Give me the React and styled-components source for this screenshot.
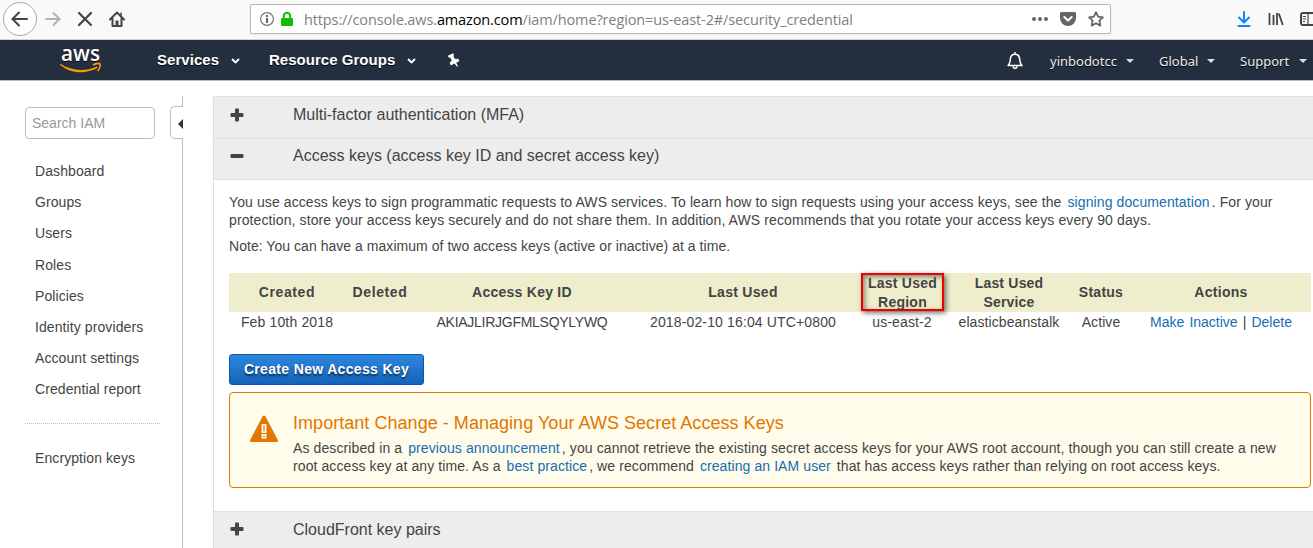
import React from 'react';
import styled, { createGlobalStyle } from 'styled-components';

const Global = createGlobalStyle`
  * { box-sizing: border-box; }
  body { margin: 0; background: #fff; color: #444; overflow: hidden; font: 14px/18px "Liberation Sans", Arial, sans-serif; }
`;

const Page = styled.div`width: 1313px; height: 548px; overflow: hidden; display: flex; flex-direction: column;`;

const BrowserBar = styled.div`
  height: 40px; flex: none; display: flex; align-items: flex-start; background: #f9f9fa;
  border-bottom: 1px solid #d0d0d2; overflow: hidden;
`;
const BrowserIcon = styled.svg`
  flex: none; display: block; width: ${p => p.$w}px; height: ${p => p.$h}px;
  margin: ${p => p.$top || 0}px 0 0 ${p => p.$left || 0}px; overflow: visible;
`;
const AddressBar = styled.div`
  width: 861px; height: 30px; margin: 4px 0 0 125px; flex: none; display: flex; background: #fff;
  border: 1px solid #b8b8ba; border-radius: 2px; box-shadow: 0 1px 3px rgba(0,0,0,.06);
`;
const Url = styled.div`
  width: 731px; padding-left: 11px; white-space: nowrap; color: #808080;
  font: 14.5px/29px "Open Sans", "Noto Sans", sans-serif; letter-spacing: ${p => p.$ls}px;
  b { font-weight: 400; color: #000; }
`;

const NavBar = styled.nav`
  height: 41px; flex: none; display: flex; background: #232f3e; border-bottom: 1px solid #b5b9be;
  color: #fff; text-shadow: 0 1px 0 #000;
`;
const Logo = styled.svg`width: 44px; height: 32px; margin: 5px 0 0 59px; flex: none; display: block; overflow: visible;`;
const MainMenu = styled.div`
  margin-left: ${p => p.$left}px; width: ${p => p.$w}px; flex: none; display: flex; white-space: nowrap;
  font: bold 15px/39px "Liberation Sans", Arial, sans-serif; letter-spacing: ${p => p.$ls}px;
  justify-content: space-between; align-items: flex-start;
`;
const UserMenu = styled.div`
  margin-left: ${p => p.$left}px; width: ${p => p.$w}px; flex: none; display: flex; white-space: nowrap;
  font: 13px/42px "Noto Sans", sans-serif; color: #eee; letter-spacing: ${p => p.$ls || 0}px;
  justify-content: space-between; align-items: flex-start;
`;
const Chevron = styled.svg`width: 9px; height: 6px; margin-top: 18px; flex: none;`;
const Caret = styled.i`
  border: 4px solid transparent; border-top-color: #ddd; border-bottom: 0; margin-top: 19px; flex: none;
`;

const Body = styled.div`flex: 1; display: flex; min-height: 0; padding-top: 15px;`;
const Sidebar = styled.aside`width: 170px; flex: none; padding: 11px 0 0 25px;`;
const Search = styled.div`
  width: 130px; height: 32px; border: 1px solid #bbb; border-radius: 4px; padding-left: 6px; margin-bottom: 17px;
  line-height: 31px; color: #999;
`;
const SideLink = styled.div`height: 31.2px; line-height: 31px; padding-left: 10px; white-space: nowrap; letter-spacing: .09px;`;
const SideRule = styled.hr`width: 135px; margin: 17px 0 19px; border: 0; border-top: 1px dotted #bbb;`;

const Splitter = styled.div`width: 13px; flex: none; display: flex; flex-direction: column; align-items: stretch;`;
const SplitLine = styled.div`
  border-right: 1px solid #bbb; height: ${p => p.$h ? p.$h + 'px' : 'auto'}; flex: ${p => p.$h ? 'none' : 1};
`;
const SplitHandle = styled.div`
  height: 33px; flex: none; border: 1px solid #bbb; border-right: 0; border-radius: 5px 0 0 5px;
  display: flex; align-items: center; justify-content: flex-end; padding-top: 3px;
  &::after { content: ''; border: 5px solid transparent; border-right-color: #333; border-left: 0; }
`;

const Panel = styled.main`
  width: 1100px; margin-left: 30px; flex: none; border-left: 1px solid #ddd; white-space: nowrap;
`;
const SectionHead = styled.div`
  height: ${p => p.$h || 41}px; background: #ededed; border-top: 1px solid #e0e0e0; display: flex; padding-left: 15px;
  border-bottom: ${p => p.$open ? '1px solid #ddd' : 0};
  font-size: 16px; line-height: ${p => p.$open ? 33 : 35}px; letter-spacing: ${p => p.$ls || 0}px;
  svg { width: 14px; height: 14px; margin: ${p => p.$top || 11}px 49px 0 1px; flex: none; }
`;
const Content = styled.section`padding: 13px 0 0 15px; height: 331px;`;
const Line = styled.div`letter-spacing: ${p => p.$ls || 0}px; margin-top: ${p => p.$top || 0}px;`;
const Link = styled.a`color: #146eb4; margin: 0 ${p => p.$tight ? 0 : 2}px;`;

const Row = styled.div`
  width: 1082px; display: grid; grid-template-columns: 116px 70px 214px 228px 90px 124px 60px 180px;
  text-align: center; align-items: center;
`;
const HeadRow = styled(Row)`
  height: 39px; margin-top: 18px; background: #eec; font-weight: bold; line-height: 19px;
`;
const DataRow = styled(Row)`height: 20px;`;
const Cell = styled.div`letter-spacing: ${p => p.$ls || 0}px; word-spacing: ${p => p.$ws || 0}px;`;
const Marked = styled.div`
  width: 83px; height: 38px; align-self: start; border: 2px solid #f00000; margin-left: 4px; padding-top: 1px;
  display: flex; align-items: center; justify-content: center;
  letter-spacing: .25px; box-shadow: 2px 2px 5px rgba(0,0,0,.55), inset 2px 2px 5px rgba(0,0,0,.45);
`;

const Button = styled.button`
  display: block; width: 195px; height: 31px; margin: 22px 0 7px; padding: 0 0 1px; border: 1px solid #0e58a8; border-radius: 3px;
  background: linear-gradient(#2f86de, #1264b9); color: #fff; font: bold 14px/28px "Liberation Sans", Arial, sans-serif;
  letter-spacing: .33px; text-shadow: 0 2px 2px rgba(0,0,0,.6);
`;
const Alert = styled.div`
  width: 1082px; height: 96px; border: 1px solid #e07700; border-radius: 4px; background: #fffceb; display: flex; padding-left: 19px;
  > svg { width: 30px; height: 28px; margin: 22px 14px 0 0; flex: none; }
`;
const AlertTitle = styled.h3`
  margin: 20px 0 6px; font-weight: 400; font-size: 18px; line-height: 20px; color: #e07700; letter-spacing: ${p => p.$ls || 0}px;
`;

const Plus = () => <svg viewBox="0 0 14 14"><path d="M6 .5h2q1 0 1 1V5h3.500q1 0 1 1v2q0 1-1 1H9v3.500q0 1-1 1H6q-1 0-1-1V9H1.500q-1 0-1-1V6q0-1 1-1H5V1.500q0-1 1-1z" fill="#444" /></svg>;
const Minus = () => <svg viewBox="0 0 14 14"><rect x=".5" y="5" width="13" height="4" rx="1" fill="#444" /></svg>;
const Down = () => <Chevron viewBox="0 0 9 6"><path d="M1 1l3.500 3.500L8 1" fill="none" stroke="#fff" strokeWidth="1.800" /></Chevron>;

const links = ['Dashboard', 'Groups', 'Users', 'Roles', 'Policies', 'Identity providers', 'Account settings', 'Credential report'];

export default function App() {
  return (
    <Page>
      <Global />
      <BrowserBar>
        <BrowserIcon $w={34} $h={34} $left={3} $top={2} viewBox="0 0 34 34">
          <circle cx="17" cy="17" r="16.500" fill="#fff" stroke="#aaa" />
          <path d="M24 17H10M16 10.500L9.500 17l6.500 6.500" fill="none" stroke="#444" strokeWidth="2" strokeLinecap="round" />
        </BrowserIcon>
        <BrowserIcon $w={16} $h={16} $left={8} $top={11} viewBox="0 0 16 16">
          <path d="M1 8h13.500M8.500 2l6 6-6 6" fill="none" stroke="#b3b3b4" strokeWidth="2" strokeLinecap="round" />
        </BrowserIcon>
        <BrowserIcon $w={16} $h={16} $left={16} $top={11} viewBox="0 0 16 16">
          <path d="M2 2l12 12M14 2L2 14" stroke="#444" strokeWidth="2.200" strokeLinecap="round" />
        </BrowserIcon>
        <BrowserIcon $w={16} $h={16} $left={16} $top={11} viewBox="0 0 16 16">
          <path d="M1 8.500L8 1.500l7 7M3.500 7.500V15h9V7.500" fill="none" stroke="#444" strokeWidth="2" strokeLinecap="round" strokeLinejoin="round" />
          <path d="M6.500 15V9.500h3V15z" fill="#444" /><path d="M12 1.500v4" stroke="#444" strokeWidth="1.500" />
        </BrowserIcon>
        <AddressBar>
          <BrowserIcon $w={14} $h={14} $left={9} $top={7} viewBox="0 0 14 14">
            <circle cx="7" cy="7" r="6.400" fill="none" stroke="#777" strokeWidth="1.200" />
            <path d="M6 3h2v2H6zM6 6h2v5H6z" fill="#666" />
          </BrowserIcon>
          <BrowserIcon $w={12} $h={14} $left={7} $top={7} viewBox="0 0 12 14">
            <path d="M2.800 7V4a3.200 3.200 0 0 1 6.400 0v3" fill="none" stroke="#12bc00" strokeWidth="2" />
            <rect y="6" width="12" height="8" rx="1" fill="#12bc00" />
          </BrowserIcon>
          <Url $ls={-0.12}>https://console.aws.<b>amazon.com</b>/iam/home?region=us-east-2#/security_credential</Url>
          <BrowserIcon $w={16} $h={4} $left={8} $top={12} viewBox="0 0 16 4">
            <g fill="#666"><circle cx="2" cy="2" r="2" /><circle cx="8" cy="2" r="2" /><circle cx="14" cy="2" r="2" /></g>
          </BrowserIcon>
          <BrowserIcon $w={16} $h={14} $left={12} $top={7} viewBox="0 0 16 14">
            <path d="M1.500 0h13A1.500 1.500 0 0 1 16 1.500V6A8 8 0 0 1 0 6V1.500A1.500 1.500 0 0 1 1.500 0z" fill="#666" />
            <path d="M4.300 5L8 8.500 11.700 5" fill="none" stroke="#fff" strokeWidth="2" strokeLinecap="round" strokeLinejoin="round" />
          </BrowserIcon>
          <BrowserIcon $w={16} $h={16} $left={12} $top={6} viewBox="0 0 16 16">
            <path d="M8 1.200l2.100 4.400 4.800.7-3.500 3.400.9 4.900L8 12.300l-4.300 2.300.9-4.900L1.100 6.300l4.800-.7z" fill="none" stroke="#666" strokeWidth="1.800" strokeLinejoin="round" />
          </BrowserIcon>
        </AddressBar>
        <BrowserIcon $w={14} $h={16} $left={126} $top={11} viewBox="0 0 14 16">
          <path d="M7 1v10M2 6.500l5 5 5-5M1.500 15h11" fill="none" stroke="#0a84ff" strokeWidth="2" strokeLinecap="round" strokeLinejoin="round" />
        </BrowserIcon>
        <BrowserIcon $w={16} $h={14} $left={17} $top={12} viewBox="0 0 16 14">
          <path d="M1.500 1v12M5.500 3v10M9 1v12M10.800 1.500l4 11.500" fill="none" stroke="#444" strokeWidth="1.800" />
        </BrowserIcon>
        <BrowserIcon $w={16} $h={14} $left={16} $top={12} viewBox="0 0 16 14">
          <rect x="1" y="1" width="16" height="12" rx="2" fill="none" stroke="#444" strokeWidth="2" />
          <path d="M8 1v12M3 4.500h3M3 7h3M3 9.500h2" stroke="#444" strokeWidth="1.200" />
        </BrowserIcon>
      </BrowserBar>

      <NavBar>
        <Logo viewBox="0 0 44 32">
          <text x="2" y="16" textLength="39" lengthAdjust="spacingAndGlyphs" fontFamily="Open Sans" fontWeight="600" fontSize="22" fill="#fff" textShadow="none">aws</text>
          <path d="M1.300 18.800c10.500 7 24.500 8.300 36.700 2.700l.8 1.300C27.500 29 12.500 29.500 1 19.800z" fill="#f90" />
          <path d="M34 20c3-1.800 6-1.700 7-1 .7 1-.2 5-2.500 7" fill="none" stroke="#f90" strokeWidth="1.600" />
        </Logo>
        <MainMenu $left={54} $w={83} $ls={0.05}>Services<Down /></MainMenu>
        <MainMenu $left={29} $w={147} $ls={0.03}>Resource Groups<Down /></MainMenu>
        <BrowserIcon $w={13} $h={14} $left={31} $top={13} viewBox="0 0 13 14">
          <path d="M.8 2.800L6.200.2l.9 1.900-.8.9 1.700 3 3.200-.3 1.300 2.300-3.300 1.700L11 13l-.4.8-.9-.6-2.300-2.600-3.500 1.800L2.700 9.800l2-2.300-1.500-3-1.600.1z" fill="#fff" />
        </BrowserIcon>
        <BrowserIcon $w={16} $h={18} $left={547} $top={12} viewBox="0 0 16 18">
          <path d="M1 13.500c2.500-2 2-5 2.500-7.500C4 3.500 6 2.300 8 2.300S12 3.500 12.500 6c.5 2.500 0 5.500 2.500 7.500zM8 0v2M6 14.500c.5 2.500 3.500 2.500 4 0" fill="none" stroke="#fff" strokeWidth="1.500" strokeLinejoin="round" />
        </BrowserIcon>
        <UserMenu $left={27} $w={84}>yinbodotcc<Caret /></UserMenu>
        <UserMenu $left={25} $w={56}>Global<Caret /></UserMenu>
        <UserMenu $left={25} $w={67}>Support<Caret /></UserMenu>
      </NavBar>

      <Body>
        <Sidebar>
          <Search>Search IAM</Search>
          {links.map(l => <SideLink key={l}>{l}</SideLink>)}
          <SideRule />
          <SideLink>Encryption keys</SideLink>
        </Sidebar>
        <Splitter><SplitLine $h={10} /><SplitHandle /><SplitLine /></Splitter>
        <Panel>
          <SectionHead $h={42}><Plus />Multi-factor authentication (MFA)</SectionHead>
          <SectionHead $h={42} $open $top={10}><Minus />Access keys (access key ID and secret access key)</SectionHead>
          <Content>
            <Line $ls={0.1}>You use access keys to sign programmatic requests to AWS services. To learn how to sign requests using your access keys, see the <Link>signing documentation</Link>. For your</Line>
            <Line $ls={0.107}>protection, store your access keys securely and do not share them. In addition, AWS recommends that you rotate your access keys every 90 days.</Line>
            <Line $top={8} $ls={0.04}>Note: You can have a maximum of two access keys (active or inactive) at a time.</Line>
            <HeadRow>
              <Cell $ls={0.6}>Created</Cell><Cell $ls={0.6}>Deleted</Cell><Cell $ls={0.25}>Access Key ID</Cell><Cell $ls={0.3}>Last Used</Cell>
              <Marked>Last Used<br />Region</Marked><Cell $ls={0.2}>Last Used<br />Service</Cell><Cell $ls={0.25}>Status</Cell><Cell $ls={0.3}>Actions</Cell>
            </HeadRow>
            <DataRow>
              <Cell $ls={0.15}>Feb 10th 2018</Cell><Cell /><Cell $ls={-0.27}>AKIAJLIRJGFMLSQYLYWQ</Cell><Cell $ls={0.14}>2018-02-10 16:04 UTC+0800</Cell>
              <Cell $ls={0.1}>us-east-2</Cell><Cell $ls={0.08}>elasticbeanstalk</Cell><Cell $ls={0.1}>Active</Cell>
              <Cell $ws={1.2}><Link $tight>Make Inactive</Link> | <Link $tight>Delete</Link></Cell>
            </DataRow>
            <Button>Create New Access Key</Button>
            <Alert>
              <svg viewBox="0 0 30 28"><path d="M13.500 1.500q1.500-2 3 0L28.800 25q.7 2-1 2H2.200q-1.700 0-1-2z" fill="#e07700" /><path d="M12.500 9h5v9h-5zM12.500 19h5v4.500h-5z" fill="#fff6e6" /><path d="M14 10.500h2v6h-2zM14 20.500h2v1.500h-2z" fill="#efb268" /></svg>
              <div>
                <AlertTitle $ls={0.04}>Important Change - Managing Your AWS Secret Access Keys</AlertTitle>
                <Line $ls={0.105}>As described in a <Link>previous announcement</Link>, you cannot retrieve the existing secret access keys for your AWS root account, though you can still create a new</Line>
                <Line $ls={0.09}>root access key at any time. As a <Link>best practice</Link>, we recommend <Link>creating an IAM user</Link> that has access keys rather than relying on root access keys.</Line>
              </div>
            </Alert>
          </Content>
          <SectionHead $top={10}><Plus />CloudFront key pairs</SectionHead>
        </Panel>
      </Body>
    </Page>
  );
}
